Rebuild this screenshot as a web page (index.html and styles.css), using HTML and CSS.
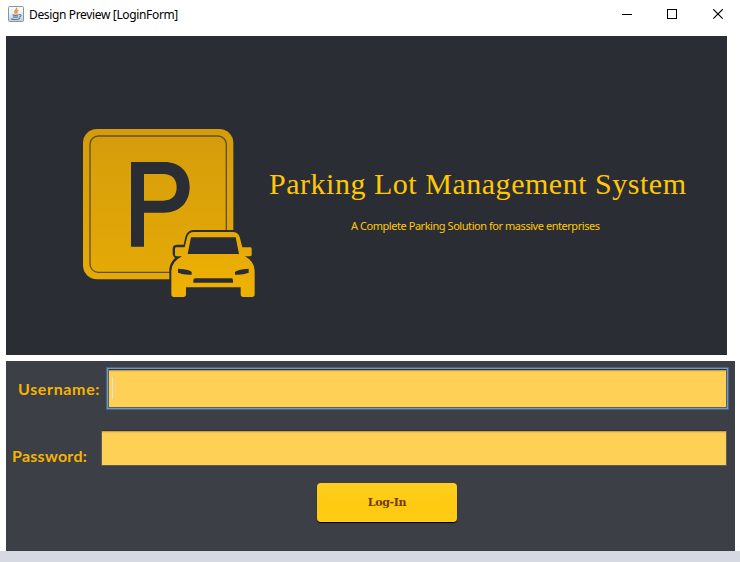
FILE: index.html
```html
<!DOCTYPE html>
<html lang="en">
<head>
<meta charset="utf-8">
<title>Design Preview [LoginForm]</title>
<link rel="stylesheet" href="styles.css">
</head>
<body>
<header class="titlebar">
  <svg class="java" width="16" height="16" viewBox="0 0 16 16">
    <defs><linearGradient id="tile" x2="0" y2="1"><stop stop-color="#fff"/><stop offset=".5" stop-color="#e8edf0"/><stop offset="1" stop-color="#c3ced6"/></linearGradient></defs>
    <rect x=".5" y=".5" width="15" height="15" rx="1" fill="url(#tile)" stroke="#8297a8"/>
    <path d="M8.700 1.600c1 2-3.600 2.900-1.200 6M10.300 4.200c-2.400 1-2 1.800-.9 3.400" fill="none" stroke="#ef8428" stroke-width="1.3"/>
    <path d="M4.500 8.800c1 .7 5 .7 6 0M5 10.700c1 .6 4 .6 5 0M3 12.700c2 1.200 7 1.100 9.300-.2M11 8.800c3-.8 2.700 2-.3 2.400" fill="none" stroke="#56799a" stroke-width="1.1"/>
  </svg>
  <span class="caption">Design Preview [LoginForm]</span>
  <svg class="controls" width="102" height="12" viewBox="0 0 102 12" fill="none" stroke="#000">
    <path d="M0 5.500h10M45.500 .5h9v9h-9z" shape-rendering="crispEdges"/>
    <path d="M91.300 .3l9.400 9.400M100.700 .3l-9.400 9.400" stroke-width="1.15"/>
  </svg>
</header>
<main>
  <section class="hero">
    <svg class="logo" width="200" height="195" viewBox="0 0 600 585">
      <defs>
        <linearGradient id="sign" x2="0" y2="1"><stop stop-color="#d49c0b"/><stop offset="1" stop-color="#e5aa06"/></linearGradient>
        <linearGradient id="car" x2="0" y2="1"><stop stop-color="#e5a906"/><stop offset="1" stop-color="#efb103"/></linearGradient>
      </defs>
      <rect x="39" y="42" width="451" height="451" rx="42" fill="url(#sign)"/>
      <rect x="60" y="63" width="409" height="409" rx="25" fill="none" stroke="#62501e" stroke-width="4"/>
      <path fill="#2b2d35" fill-rule="evenodd" d="M183 141H282C330 141 359 171 359 216S330 293 282 293H222V395H183ZM222 177V257H280C306 257 320 242 320 217S306 177 280 177Z"/>
      <path fill="#2b2d35" d="M298 500V462Q300 443 315 429Q308 425 308 414V400Q309 389 320 389H341L346 366Q351 346 370 345H495V500Z"/>
      <path fill="url(#car)" fill-rule="evenodd" d="M372 351H488Q504 351 509 366L517 397H541Q545 397 545 401V419Q545 424 540 424H525Q554 440 554 467V538Q554 546 546 546H520Q512 546 512 538V517H348V538Q348 546 340 546H312Q304 546 304 538V467Q305 440 336 424H320Q315 424 315 419V401Q315 397 320 397H344L351 368Q355 351 372 351ZM363 367L353 417H507L497 367ZM324 461V473Q343 481 365 479V471Q362 464 324 461ZM536 461Q500 463 495 471V479Q518 481 536 473ZM376 490Q370 490 370 496V503H489V496Q489 490 484 490Z"/>
    </svg>
    <div class="heading">
      <h1><span>Parking Lot Management System</span></h1>
      <p><span>A Complete Parking Solution for massive enterprises</span></p>
    </div>
  </section>
  <form class="login">
    <div class="row user">
      <label for="user">Username:</label>
      <div class="field focused" id="user"><i class="caret"></i></div>
    </div>
    <div class="row pass">
      <label for="pass">Password:</label>
      <div class="field" id="pass"></div>
    </div>
    <button type="button">Log-In</button>
  </form>
</main>
<footer></footer>
</body>
</html>
```
FILE: styles.css
```css
* { box-sizing: border-box; }
body { margin: 0; width: 740px; height: 562px; overflow: hidden; background: #fff; }
.titlebar { height: 36px; display: flex; align-items: flex-start; padding: 6px 0 0 8px; }
.caption { margin-left: 5px; margin-top: 1px; width: 593px; font: 12px/16px "Noto Sans", sans-serif; letter-spacing: -.35px; color: #000; white-space: nowrap; }
.controls { margin-top: 3px; flex: none; }
main { padding-left: 6px; }
.hero { width: 721px; height: 319px; background: #2b2d35; display: flex; }
.logo { margin: 79px 0 0 64px; flex: none; }
.heading { color: #ffc800; white-space: nowrap; }
h1 { margin: 129px 0 0 -1px; font: 400 30px/38px "Liberation Serif", serif; letter-spacing: .52px; }
p { margin: 14px 0 0 81px; font: 11px/18px "Noto Sans", sans-serif; letter-spacing: -.45px; }
.login { margin-top: 6px; width: 729px; height: 190px; background: #3c3f46; overflow: hidden; }
.row { display: flex; align-items: flex-start; }
.user { padding: 8px 0 0 12px; }
.pass { height: 58px; padding: 22px 0 0 6px; }
label { color: #f5b400; font: 700 16px/22px "Lato", sans-serif; white-space: nowrap; flex: none; }
.user label { width: 90px; padding-top: 9px; letter-spacing: .65px; }
.pass label { width: 89px; padding-top: 15px; letter-spacing: .27px; }
.field { background: #ffd056; width: 626px; height: 36px; border: 1px solid #5b5b57; border-top-color: #303136; box-shadow: inset 0 1px #c8a24b, inset 0 2px #edc253; }
.focused { width: 619px; height: 39px; border-color: #55616b; border-top-color: #29303b; box-shadow: 0 0 0 1px #7298c3, 0 0 0 2px #4b6682, inset 0 1px #c8a24b, inset 0 2px #edc253; }
.caret { display: block; width: 1px; height: 22px; margin: 7px 0 0 3px; background: #dce0ee; }
button { display: block; margin: 17px 0 0 311px; width: 140px; height: 39px; padding: 0; border: 0; border-radius: 4px; background: linear-gradient(#ffce20, #ffca10 55%, #ffcb15); box-shadow: 0 1px 1px #000; color: #713b05; font: 700 11px/38px "DejaVu Serif", serif; letter-spacing: -.35px; }
footer { height: 11px; background: #d6d9e1; }
```
